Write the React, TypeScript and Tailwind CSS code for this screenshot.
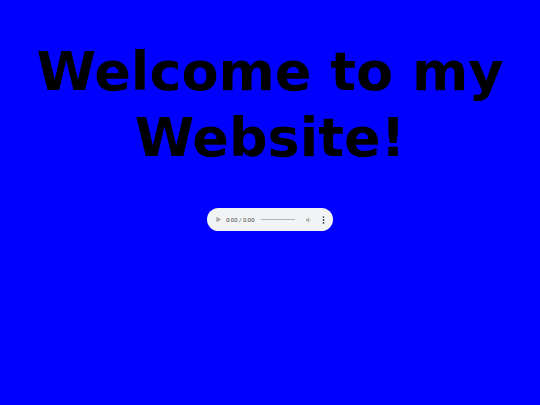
import React from "react";

function AudioPlayer() {
  return (
    <div className="flex h-[23px] w-[126px] items-center rounded-full bg-[#f1f3f4] pl-[8px] pr-[8px]">
      <svg width="7" height="7" viewBox="0 0 10 10" className="shrink-0">
        <path d="M2 1 L9 5 L2 9 Z" fill="#a6a6a6" />
      </svg>
      <span
        className="ml-[4px] whitespace-nowrap text-[6px] leading-none text-[#4a4a4a]"
        style={{ fontFamily: "Roboto, sans-serif" }}
      >
        0:00 / 0:00
      </span>
      <div className="ml-[6px] h-[1px] w-[34px] bg-[#b4b4b4]" />
      <svg width="8" height="8" viewBox="0 0 24 24" className="ml-[10px] shrink-0">
        <path d="M3 9v6h4l5 5V4L7 9H3z" fill="#b0b0b0" />
        <path d="M16.5 12A4.5 4.5 0 0 0 14 8v8a4.5 4.5 0 0 0 2.5-4z" fill="#b0b0b0" />
      </svg>
      <svg width="3" height="8" viewBox="0 0 3 9" className="ml-[9px] shrink-0">
        <circle cx="1.5" cy="1.2" r="1" fill="#3c3c3c" />
        <circle cx="1.5" cy="4.5" r="1" fill="#3c3c3c" />
        <circle cx="1.5" cy="7.8" r="1" fill="#3c3c3c" />
      </svg>
    </div>
  );
}

export default function App() {
  return (
    <div className="h-[405px] w-[540px] overflow-hidden bg-[#0000ff] pt-[39px]">
      <h1
        className="text-center text-[54px] font-bold text-black"
        style={{ fontFamily: '"DejaVu Sans", sans-serif', lineHeight: "66px" }}
      >
        Welcome to my Website!
      </h1>
      <div className="mt-[37px] flex justify-center">
        <AudioPlayer />
      </div>
    </div>
  );
}
